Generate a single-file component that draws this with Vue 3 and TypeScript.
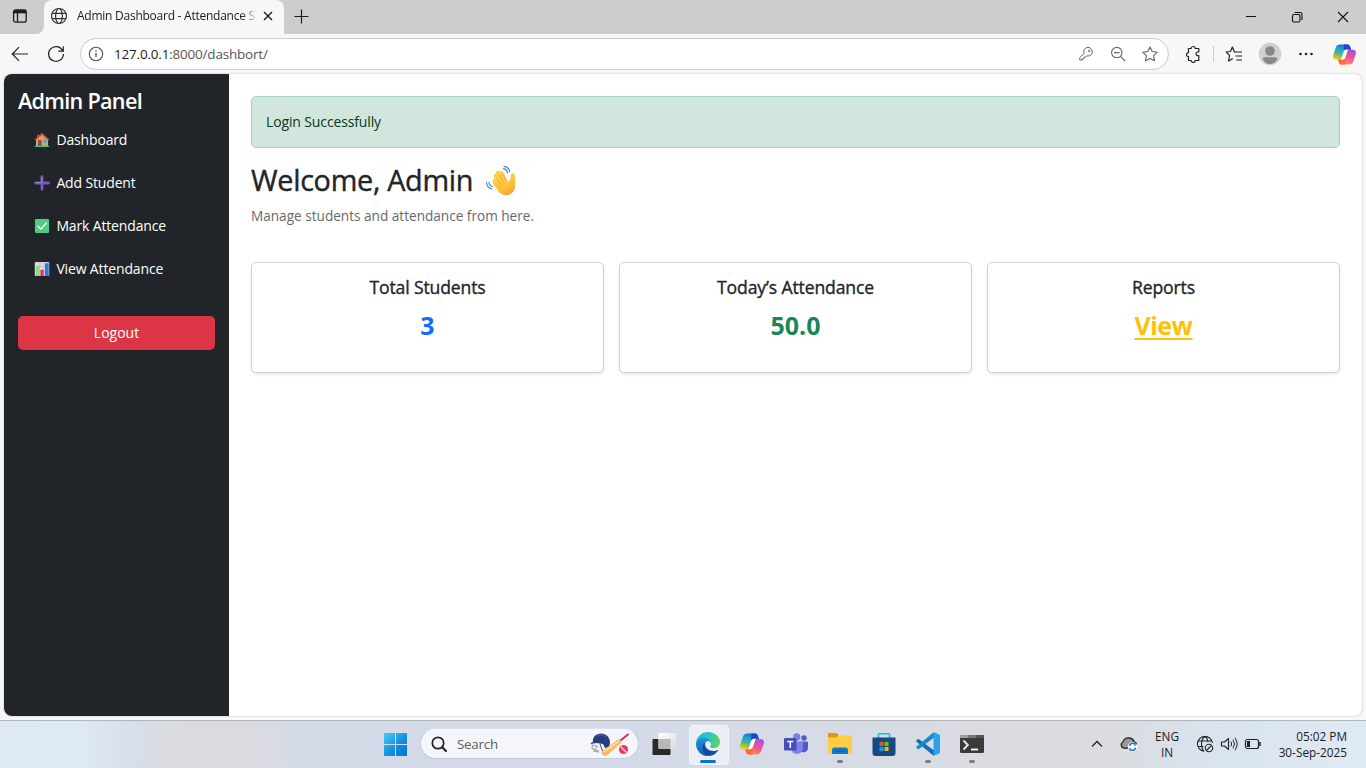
<script setup lang="ts">
interface NavItem {
  icon: 'home' | 'plus' | 'check' | 'chart'
  label: string
}
interface StatCard {
  title: string
  value: string
  tone: string
}

const navItems: NavItem[] = [
  { icon: 'home', label: 'Dashboard' },
  { icon: 'plus', label: 'Add Student' },
  { icon: 'check', label: 'Mark Attendance' },
  { icon: 'chart', label: 'View Attendance' },
]

const cards: StatCard[] = [
  { title: 'Total Students', value: '3', tone: 'primary' },
  { title: 'Today’s Attendance', value: '50.0', tone: 'success' },
  { title: 'Reports', value: 'View', tone: 'warning' },
]
</script>

<template>
  <div class="screen">
    <svg class="defs" width="0" height="0" aria-hidden="true">
      <defs>
        <linearGradient id="cpA" x1="0.6" y1="0" x2="0.3" y2="1">
          <stop offset="0" stop-color="#1b62d8" />
          <stop offset="0.3" stop-color="#18a0e0" />
          <stop offset="0.6" stop-color="#4cb583" />
          <stop offset="1" stop-color="#f5cb16" />
        </linearGradient>
        <linearGradient id="cpB" x1="0.8" y1="0" x2="0.3" y2="1">
          <stop offset="0" stop-color="#a84fe8" />
          <stop offset="0.5" stop-color="#ee5590" />
          <stop offset="1" stop-color="#fb9556" />
        </linearGradient>
        <symbol id="copilot" viewBox="0 0 24 24">
          <path d="M7.500 1.500H15c1.700 0 2.500 1 3 2.700l.9 2.800h-2.600c-1.700 0-2.700.9-3.200 2.600l-1.700 5.200c-.6 1.700-1.700 2.500-3.500 2.500H3.300C.7 17.300-.4 15.400.2 12.800L2.800 4.900C3.500 2.600 5.100 1.500 7.500 1.500z" fill="url(#cpA)" />
          <path d="M11.500 1.500H15c1.700 0 2.500 1 3 2.700l.9 2.800h-2.600c-1.700 0-2.700.9-3.200 2.600L11.200 8z" fill="#1b48c4" />
          <path d="M16.500 22.500H9c-1.700 0-2.500-1-3-2.700l-.8-2.500h2.700c1.800 0 2.900-.8 3.500-2.500l1.700-5.200c.5-1.700 1.500-2.600 3.200-2.600h4.400c2.600 0 3.700 1.900 3.100 4.500l-2.600 7.600c-.7 2.300-2.300 3.400-4.700 3.400z" fill="url(#cpB)" />
          <path d="M12.500 22.500H9c-1.700 0-2.500-1-3-2.700l-.8-2.500h2.700c1.800 0 2.900-.8 3.500-2.500l1.400 1z" fill="#fa6a40" />
          <path d="M13.900 6.800c-1.500 0-2.400.9-2.900 2.500l-1.900 5.800c-.3 1-.7 1.700-1.300 2.200h2.300c1.500 0 2.400-.9 2.900-2.500l1.900-5.800c.3-1 .7-1.800 1.400-2.200z" fill="#fff" />
        </symbol>
      </defs>
    </svg>

    <header class="tabbar">
      <div class="workspaces">
        <svg width="16" height="16" viewBox="0 0 16 16" fill="none" stroke="#1b1b1b" stroke-width="1.3">
          <rect x="1.600" y="2" width="12.600" height="12.200" rx="2" />
          <path d="M1.600 3.800h12.600" stroke-width="3" />
          <path d="M5.500 5v9" />
        </svg>
      </div>
      <div class="tab">
        <svg width="18" height="18" viewBox="0 0 18 18" fill="none" stroke="#333" stroke-width="1.200">
          <circle cx="9" cy="9" r="7.500" />
          <ellipse cx="9" cy="9" rx="3.400" ry="7.500" />
          <path d="M2.200 6.300h13.600M2.200 11.700h13.600" />
        </svg>
        <span class="tab-title">Admin Dashboard - Attendance S</span>
        <svg class="tab-close" width="10" height="10" viewBox="0 0 10 10" stroke="#1b1b1b" stroke-width="1.400">
          <path d="M1 1l8 8M9 1L1 9" />
        </svg>
      </div>
      <svg class="new-tab" width="16" height="16" viewBox="0 0 16 16" stroke="#1b1b1b" stroke-width="1.200">
        <path d="M8.500 1.500v14M1.500 8.500h14" />
      </svg>
      <div class="window-buttons">
        <svg width="46" height="34" viewBox="0 0 46 34" fill="none" stroke="#111"><path d="M18 16.500h10" /></svg>
        <svg width="46" height="34" viewBox="0 0 46 34" fill="none" stroke="#111" stroke-width="1.100">
          <rect x="18.500" y="14.500" width="7.500" height="7.500" rx="1.500" />
          <path d="M20.500 12.500h5.500q2 0 2 2v5.500" />
        </svg>
        <svg width="46" height="34" viewBox="0 0 46 34" fill="none" stroke="#111" stroke-width="1.100"><path d="M18 12l10 10M28 12L18 22" /></svg>
      </div>
    </header>

    <div class="toolbar">
      <div class="tool">
        <svg width="18" height="18" viewBox="0 0 18 18" fill="none" stroke="#222" stroke-width="1.200"><path d="M17 9H1.500M8 2.200L1.300 9 8 15.800" /></svg>
      </div>
      <div class="tool">
        <svg width="18" height="18" viewBox="0 0 18 18" fill="none" stroke="#222" stroke-width="1.200"><path d="M15.700 5.800A7.400 7.400 0 1 0 16.400 9M16.300 1.300v4.900h-5" /></svg>
      </div>
      <div class="address">
        <svg width="16" height="16" viewBox="0 0 16 16" fill="none" stroke="#555" stroke-width="1.100">
          <circle cx="8" cy="8" r="6.700" /><path d="M8 7v4.200M8 4.300v1.400" stroke-width="1.300" />
        </svg>
        <span class="url">127.0.0.1<i>:8000/dashbort/</i></span>
        <div class="address-icons">
          <svg width="16" height="16" viewBox="0 0 16 16" fill="none" stroke="#666" stroke-width="1">
            <path d="M6.100 7.500A4.300 4.300 0 1 1 9 9.900L7.600 11H6v1.700H4.400V14H1.800v-2.500z" stroke-linejoin="round" />
            <circle cx="11.200" cy="4.900" r=".8" />
          </svg>
          <svg width="16" height="16" viewBox="0 0 16 16" fill="none" stroke="#666" stroke-width="1.100">
            <circle cx="6.800" cy="6.600" r="5.200" /><path d="M4 6.600h5.600M10.600 10.400L15 15" />
          </svg>
          <svg width="16" height="16" viewBox="0 0 16 16" fill="none" stroke="#666" stroke-width="1.100" stroke-linejoin="round">
            <path d="M8 .9l2.200 4.600 5.100.7-3.700 3.500.9 5.100L8 12.400l-4.500 2.400.9-5.100L.7 6.200l5.100-.7z" />
          </svg>
        </div>
      </div>
      <div class="tool tool-ext">
        <svg width="18" height="18" viewBox="0 0 18 18" fill="none" stroke="#222" stroke-width="1.200" stroke-linejoin="round">
          <path d="M4.500 3.500h2.700a2 2 0 0 1 4 0h3.600V7h-1a1.700 1.700 0 0 0 0 3.600h1v4.900h-3.600a2 2 0 0 1-4 0H4.500v-3.800a2 2 0 0 1 0-4z" />
        </svg>
      </div>
      <span class="divider"></span>
      <div class="tool tool-fav">
        <svg width="18" height="18" viewBox="0 0 18 18" fill="none" stroke="#222" stroke-width="1.200" stroke-linejoin="round">
          <path d="M12 7H9.400L7.400 2 5.400 6.500 1.200 7l3.300 3.400L3.600 16l4.200-2.500M9.500 7H17M10.500 11H17M11.200 15H17" />
        </svg>
      </div>
      <div class="tool">
        <svg width="24" height="24" viewBox="0 0 24 24">
          <circle cx="12" cy="12" r="11.200" fill="#d2d0ce" /><circle cx="12" cy="9" r="4.800" fill="#8a8886" />
          <path d="M4.800 17.200q0-2 2-2h10.400q2 0 2 2Q17 22 12 22t-7.200-4.800z" fill="#8a8886" />
        </svg>
      </div>
      <div class="tool">
        <svg width="16" height="4" viewBox="0 0 16 4" fill="#222"><circle cx="2.500" cy="2" r="1.300" /><circle cx="8" cy="2" r="1.300" /><circle cx="13.500" cy="2" r="1.300" /></svg>
      </div>
      <div class="tool tool-copilot"><svg width="23" height="23"><use href="#copilot" /></svg></div>
    </div>

    <div class="viewport">
      <aside class="sidebar">
        <h4>Admin Panel</h4>
        <nav>
          <a v-for="item in navItems" :key="item.label">
            <svg v-if="item.icon === 'home'" width="16" height="16" viewBox="0 0 16 16">
              <path d="M3 2.500h2v4H3z" fill="#9d4c3b" /><path d="M2 7l6-5 6 5v7.500H2z" fill="#d9a06c" />
              <path d="M8 .8l7.300 6.800-1 .9L8 3 1.700 8.500l-1-.9z" fill="#dd4b36" />
              <path d="M4 8h3.600v6H4z" fill="#8b4f43" /><path d="M9.500 7.500h3v3.200h-3z" fill="#35a8ec" />
              <path d="M.8 13.700h14.400v1.200H.8z" fill="#35c878" />
            </svg>
            <svg v-else-if="item.icon === 'plus'" width="16" height="16" viewBox="0 0 16 16">
              <path d="M8 1.700v12.600M1.500 8h13" stroke="#7957bd" stroke-width="2.800" stroke-linecap="round" />
              <path d="M7.400 2v5.500H2" stroke="#9a84d4" fill="none" stroke-width="1" />
            </svg>
            <svg v-else-if="item.icon === 'check'" width="16" height="16" viewBox="0 0 16 16">
              <rect x=".9" y=".9" width="14.200" height="14.200" rx="1.300" fill="#4bcd83" />
              <path d="M4 8.300l2.800 2.800L12.400 5" fill="none" stroke="#fff" stroke-width="1.400" stroke-linecap="round" />
            </svg>
            <svg v-else width="16" height="16" viewBox="0 0 16 16">
              <rect x=".8" y="1" width="14.400" height="14" rx="1" fill="#ddd5e3" />
              <path d="M1 5.500h14M1 10h14M5.700 1v14M10.500 1v14" stroke="#c4bacb" stroke-width=".5" />
              <path d="M2 5h3.500v10H2z" fill="#8bdc72" /><path d="M6.500 8.800h3.200V15H6.500z" fill="#e42e70" /><path d="M11 2.300h3.700V15H11z" fill="#2c80d4" />
            </svg>
            <span>{{ item.label }}</span>
          </a>
        </nav>
        <button type="button" class="logout">Logout</button>
      </aside>

      <main class="content">
        <div class="alert"><span>Login Successfully</span></div>
        <h2>
          <span>Welcome, Admin</span>
          <svg width="32" height="32" viewBox="0 0 32 32" fill="none">
            <defs><linearGradient id="hand" x1=".3" y1=".1" x2=".8" y2="1"><stop offset="0" stop-color="#ffd04a" /><stop offset=".6" stop-color="#ffc138" /><stop offset="1" stop-color="#f59a33" /></linearGradient></defs>
            <path d="M10.400 17.200l-.8-1.400M12 14l-1.400-3.200M15 11.800l-2-4M18.500 11.500l-2-3.500" stroke="#ffcd45" stroke-width="4" stroke-linecap="round" />
            <path d="M9 14.500L18 8.500 23.500 17l1.700-2.500.6-4.600c.3-2.300 3.700-2 4 .4.500 3.500.8 7.500.3 11.200-.7 5.500-4.300 8.500-9.300 8.500-3.800 0-6-1.800-8.200-4.600L8.200 19q-1.500-2.500.8-4.500z" fill="url(#hand)" />
            <path d="M12 13.800l3.600 5M14.600 11l4.200 6M17.700 9.800l3.600 5.400" stroke="#f2a02d" stroke-width=".8" stroke-linecap="round" />
            <path d="M18.500 3.600c2.200.3 3.600 1.800 4 4.200M19 1.300c3.200.4 5.200 2.500 5.600 5.500M4 17.300c.2 2.200 1.500 3.800 3.700 4.500M1.500 17.500c.3 3.200 2.200 5.500 5 6.400" stroke="#3f8ccb" stroke-width="1.200" stroke-linecap="round" />
          </svg>
        </h2>
        <p class="muted"><span>Manage students and attendance from here.</span></p>
        <section class="cards">
          <article v-for="card in cards" :key="card.title" class="card">
            <h5>{{ card.title }}</h5>
            <p :class="['value', card.tone]">{{ card.value }}</p>
          </article>
        </section>
      </main>
    </div>

    <footer class="taskbar">
      <div class="apps">
        <div class="app">
          <svg width="24" height="24" viewBox="0 0 24 24">
            <defs><linearGradient id="win" x1="0" y1="0" x2="24" y2="24" gradientUnits="userSpaceOnUse"><stop offset="0" stop-color="#4ecbf7" /><stop offset=".55" stop-color="#1191e0" /><stop offset="1" stop-color="#0473ce" /></linearGradient></defs>
            <path d="M0 1.500Q0 1 .5 1H11v11H0zM12 1h10.500q.5 0 .5.500V12H12zM0 13h11v11H.5q-.5 0-.5-.5zM12 13h11v10.500q0 .5-.5.500H12z" fill="url(#win)" />
          </svg>
        </div>
        <div class="search">
          <svg width="16" height="16" viewBox="0 0 16 16" fill="none" stroke="#222" stroke-width="1.700"><circle cx="7" cy="7" r="5.700" /><path d="M11.200 11.200L15 15" stroke-width="2" stroke-linecap="round" /></svg>
          <span>Search</span>
          <svg class="cricket" width="42" height="26" viewBox="0 0 42 26">
            <path d="M3 14l7 2M2 17l8 3M4 20l6 1M3 13q0 8 7 8M7 14v7" stroke="#aaa" fill="none" />
            <path d="M4 12C3 6 7 2.500 12 2.500S21 6 21 12l-1 4-4 1-2-4-7-1-5 1q-1-1 2-2z" fill="#273b7d" />
            <path d="M8 5q4-3 9 1" stroke="#5268ae" fill="none" /><path d="M11 13l3 8 4-4" stroke="#444" fill="none" />
            <path d="M12.500 20.500L29 8.500q2-1 4 2.500L18 24.500q-2 1-4-.5t-1.500-3.500z" fill="#f8b667" /><path d="M14.500 21L31 9.500" stroke="#ffdb9d" stroke-width="1.700" />
            <path d="M32 9l7-5.500" stroke="#d52d46" stroke-width="1.900" stroke-linecap="round" />
            <circle cx="34.500" cy="18.500" r="4.600" fill="#ee3a60" /><path d="M31.500 15.500l6 6" stroke="#ffc6d0" stroke-width="1.500" />
          </svg>
        </div>
        <div class="app">
          <svg width="24" height="24" viewBox="0 0 24 24">
            <defs><linearGradient id="tv" x1="0" y1="0" x2="1" y2="1"><stop offset="0" stop-color="#fff" /><stop offset="1" stop-color="#dcdcdc" /></linearGradient></defs>
            <rect y="7" x=".5" width="18" height="16" rx="1" fill="#292929" /><rect x="6.500" y="1" width="17.500" height="16" rx="1" fill="url(#tv)" /><path d="M6.500 7h12v10h-11q-1 0-1-1z" fill="#b8b8b8" />
          </svg>
        </div>
        <div class="app active">
          <svg width="24" height="24" viewBox="4.500 3.800 256 256">
            <defs>
              <linearGradient id="eg" x1="0" y1=".3" x2="1" y2=".4"><stop offset="0" stop-color="#2aaee4" /><stop offset=".5" stop-color="#2fc3c5" /><stop offset="1" stop-color="#5fd658" /></linearGradient>
              <linearGradient id="eb" x1="0" y1="0" x2="0" y2="1"><stop offset="0" stop-color="#1b9de2" /><stop offset="1" stop-color="#0b5db5" /></linearGradient>
            </defs>
            <path d="M235.680 195.460a93.730 93.730 0 0 1-10.540 4.710 101.870 101.870 0 0 1-35.900 6.460c-47.320 0-88.540-32.550-88.540-74.320A31.480 31.480 0 0 1 117.130 105c-42.800 1.800-53.800 46.400-53.800 72.530 0 73.880 68.090 81.370 82.760 81.370 7.910 0 19.840-2.300 27-4.560l1.310-.44a128.340 128.340 0 0 0 66.600-52.800 4 4 0 0 0-5.320-5.640z" fill="#0e4f98" />
            <path d="M110.340 246.340A79.200 79.200 0 0 1 87.600 225a80.720 80.720 0 0 1 29.530-120c3.120-1.470 8.450-4.130 15.540-4a32.350 32.350 0 0 1 25.690 13 31.880 31.880 0 0 1 6.360 18.660c0-.21 24.460-79.600-80-79.600-43.900 0-80 41.660-80 78.210a130.150 130.150 0 0 0 12.110 56 128 128 0 0 0 156.380 67.110 75.550 75.550 0 0 1-62.780-8z" fill="url(#eb)" />
            <path d="M156.940 153.780c-.81 1.050-3.300 2.500-3.300 5.660 0 2.610 1.700 5.120 4.720 7.230 14.380 10 41.490 8.680 41.560 8.680a59.560 59.560 0 0 0 30.270-8.350 61.380 61.380 0 0 0 30.430-52.880c.26-22.410-8-37.310-11.340-43.910C228.090 28.760 182.350 3.810 132.610 3.810a128 128 0 0 0-128 126.200c.48-36.540 36.800-66.050 80-66.050 3.500 0 23.460.34 42 10.070 16.340 8.580 24.900 18.940 30.850 29.210 6.180 10.670 7.280 24.150 7.280 29.520s-2.740 13.330-7.800 20.020z" fill="url(#eg)" />
          </svg>
        </div>
        <div class="app"><svg width="24" height="24"><use href="#copilot" /></svg></div>
        <div class="app">
          <svg width="24" height="24" viewBox="0 0 24 24">
            <circle cx="20" cy="6" r="2.700" fill="#5059c9" /><path d="M16 9.500h7q1 0 1 1V16a4.500 4.500 0 0 1-8 2.500z" fill="#5059c9" />
            <circle cx="12.800" cy="5" r="3.700" fill="#7b83eb" /><path d="M8 9.500h10q1 0 1 1V16a6 6 0 0 1-12 0z" fill="#7b83eb" />
            <rect y="6" width="12.500" height="12.500" rx="1.200" fill="#464eb8" /><path d="M3.300 9.500h6M6.300 9.500v6.500" stroke="#fff" stroke-width="1.500" />
          </svg>
        </div>
        <div class="app running">
          <svg width="24" height="24" viewBox="0 0 24 24">
            <path d="M0 2q0-1 1-1h7.500L10.500 3v3H0z" fill="#dc9a0b" /><path d="M0 5.500h8l2.500-2H23q1 0 1 1V21q0 1-1 1H1q-1 0-1-1z" fill="#ffcd41" />
            <path d="M4 22v-4q0-2.500 2.500-2.500h11Q20 15.500 20 18v4z" fill="#1578c8" /><path d="M7 19h10" stroke="#0b579d" stroke-width="1" />
          </svg>
        </div>
        <div class="app">
          <svg width="24" height="24" viewBox="0 0 24 24">
            <path d="M6.500 6V2.500q0-.8.800-.8h9.400q.8 0 .8.800V6" fill="none" stroke="#22b5ec" stroke-width="1.600" />
            <path d="M.5 5.500h23V21q0 3-3 3h-17q-3 0-3-3z" fill="#164a81" />
            <path d="M7.500 10h4v4h-4z" fill="#f25022" /><path d="M12.500 10h4v4h-4z" fill="#7fba00" /><path d="M7.500 15h4v4h-4z" fill="#00a4ef" /><path d="M12.500 15h4v4h-4z" fill="#ffb900" />
          </svg>
        </div>
        <div class="app running">
          <svg width="24" height="24" viewBox="0 0 24 24">
            <path d="M.4 8.500l1.300-1.300q.6-.5 1.300 0L18 18.500V24L.5 9.700q-.6-.6-.1-1.200z" fill="#0f6fb5" /><path d="M.4 15.700l1.300 1.300q.6.500 1.300 0L18 5.500V0L.5 14.500q-.6.600-.1 1.200z" fill="#1789cf" />
            <path d="M17.500 0L23 2.500q1 .5 1 1.500v16q0 1-1 1.500L17.500 24z" fill="#29a3ee" />
          </svg>
        </div>
        <div class="app running">
          <svg width="24" height="24" viewBox="0 0 24 24">
            <rect y="3" width="24" height="18" rx="1.300" fill="#3a3a3a" /><path d="M0 6V4.300Q0 3 1.300 3H8v3z" fill="#a0a0a0" /><path d="M8 3h8v3H8z" fill="#777" /><path d="M16 3h6.700Q24 3 24 4.300V6h-8z" fill="#555" />
            <path d="M3.500 8.500l4.300 4.500-4.300 4.500" fill="none" stroke="#e3e3e3" stroke-width="2" /><path d="M11 17.500h7" stroke="#fff" stroke-width="1.800" />
          </svg>
        </div>
      </div>

      <div class="tray">
        <svg class="chevron" width="12" height="8" viewBox="0 0 12 8" fill="none" stroke="#222" stroke-width="1.300"><path d="M1 6.500l5-5 5 5" /></svg>
        <svg class="cloud" width="18" height="16" viewBox="0 0 18 16">
          <path d="M4 12.200A3.500 3.500 0 0 1 3 5.700Q5 1.500 9.300 2q4 .4 4.800 4 2.500.5 2.300 3.300-.3 2.900-3 2.900z" fill="#999" stroke="#222" stroke-width="1.300" />
          <circle cx="12.500" cy="10.800" r="4.700" fill="#fff" /><path d="M9.500 10a3 3 0 0 1 5.300-1.500V7M15.500 11.600a3 3 0 0 1-5.300 1.600v1.500" fill="none" stroke="#1574cf" stroke-width="1.500" />
        </svg>
        <div class="lang"><span>ENG</span><span>IN</span></div>
        <svg class="globe" width="18" height="18" viewBox="0 0 18 18" fill="none" stroke="#222" stroke-width="1.100">
          <path d="M8 16.300A7.500 7.500 0 1 1 16.400 8M8 16.300Q5.500 14 5.500 9T9 1.300q2.300 1.500 3 5.700M2 6h14M2 11.500h5.500" />
          <circle cx="13" cy="13" r="3.700" /><path d="M10.500 15.500l5-5" />
        </svg>
        <svg class="speaker" width="18" height="16" viewBox="0 0 18 16" fill="none" stroke="#222" stroke-width="1.100" stroke-linejoin="round">
          <path d="M1.500 6h3l4-3.500v11l-4-3.500h-3z" /><path d="M10.800 5.500q1.700 2.500 0 5M13 3.700q3 4.300 0 8.600M15 1.800q4.300 6.200 0 12.400" stroke-width="1" />
        </svg>
        <svg class="battery" width="18" height="12" viewBox="0 0 18 12"><rect x="1.500" y="1.500" width="13" height="9" rx="2" fill="none" stroke="#222" stroke-width="1.200" /><rect x="3" y="3" width="3" height="6" fill="#222" /><path d="M16 4v4" stroke="#222" stroke-width="1.500" /></svg>
        <div class="clock"><span>05:02 PM</span><span>30-Sep-2025</span></div>
      </div>
    </footer>
  </div>
</template>

<style>
body { margin: 0; overflow: hidden; }
</style>

<style scoped>
* { box-sizing: border-box; }
.screen {
  width: 1366px; height: 768px; display: flex; flex-direction: column; overflow: hidden;
  background: #f7f7f7; color: #212529; font-family: "Open Sans", "Noto Sans", sans-serif;
}
svg { display: block; flex: none; }
.defs { position: absolute; }

.tabbar { height: 34px; flex: none; display: flex; align-items: center; background: #cdcdcd; }
.workspaces { width: 44px; height: 34px; flex: none; background: #f7f7f7; }
.workspaces svg { box-sizing: content-box; width: 16px; padding: 8px 16px 10px 12px; background: #cdcdcd; border-bottom-right-radius: 8px; }
.tab { width: 240px; height: 34px; flex: none; display: flex; align-items: center; padding: 0 11px 2px 6px; background: #f7f7f7; border-radius: 8px 8px 0 0; }
.tab-title {
  width: 181px; flex: none; margin-left: 9px; white-space: nowrap; font-size: 12px; line-height: 18px; letter-spacing: -0.25px; color: #1b1b1b;
  mask-image: linear-gradient(90deg, #000 164px, transparent 181px);
}
.tab-close { margin-left: auto; }
.new-tab { margin: -3px 0 0 9px; }
.window-buttons { margin-left: auto; display: flex; }

.toolbar { height: 40px; flex: none; display: flex; align-items: center; padding: 0 4px 0 2px; }
.tool { width: 36px; display: flex; justify-content: center; }
.address { width: 1089px; height: 32px; display: flex; align-items: center; margin-left: 6px; padding: 0 10px 0 7px; border: 1px solid #ccc; border-radius: 16px; background: #fff; }
.url { margin-left: 10px; font-size: 13.500px; letter-spacing: -0.2px; color: #1b1b1b; }
.url i { font-style: normal; color: #555; }
.address-icons { margin-left: auto; display: flex; gap: 16px; }
.tool-ext { margin-left: 6px; }
.divider { width: 1px; height: 16px; margin-left: 2px; background: #ccc; }
.tool-fav { margin-left: 2px; }
.tool-copilot { margin-left: 2px; }

.viewport { height: 642px; flex: none; display: flex; margin: 0 4px; overflow: hidden; border-radius: 8px; background: #fff; box-shadow: 0 0 2px rgba(0, 0, 0, 0.28); }
.sidebar { width: 225px; flex: none; padding: 14px; background: #212529; color: #fff; }
.sidebar h4 { margin: 0 0 8px; font-size: 21.600px; line-height: 26px; font-weight: 600; letter-spacing: -0.7px; }
.sidebar nav { display: flex; flex-direction: column; gap: 7px; }
.sidebar a { display: flex; align-items: center; gap: 6px; height: 36px; padding-left: 16.400px; font-size: 14px; letter-spacing: -0.15px; }
.sidebar a span { margin-top: -1px; }
.logout { display: block; width: 197px; height: 34px; margin-top: 29px; padding: 0 0 2px; border: 0; border-radius: 5px; background: #dc3545; color: #fff; font: 14px "Open Sans", sans-serif; }

.content { flex: 1; padding: 22px; }
.alert { height: 52px; display: flex; align-items: center; padding: 0 14px 2px; border: 1px solid #a3cfbb; border-radius: 5px; background: #d1e7dd; color: #0a3622; font-size: 14px; letter-spacing: -0.13px; }
.content h2 { display: flex; align-items: center; gap: 12px; height: 36px; margin: 13px 0 8px; font-size: 28.800px; font-weight: 500; letter-spacing: -0.3px; -webkit-text-stroke: 0.4px #212529; }
.content h2 svg { margin-top: 4px; }
.muted { margin: 0; font-size: 13.600px; line-height: 22px; color: #65696d; }
.cards { display: grid; grid-template-columns: repeat(3, 1fr); gap: 15px; margin-top: 35px; }
.card { height: 111px; padding: 13px; border: 1px solid #d0d1d2; border-radius: 5px; background: #fff; text-align: center; box-shadow: 0 2px 3px rgba(0, 0, 0, 0.075); }
.card h5 { margin: 0 0 7px; font-size: 17.600px; line-height: 22px; font-weight: 500; letter-spacing: -0.15px; -webkit-text-stroke: 0.35px #212529; }
.value { margin: 0; font-size: 25px; line-height: 40px; font-weight: 700; }
.primary { color: #0d6efd; }
.success { color: #198754; }
.warning { color: #ffc107; letter-spacing: -0.5px; text-decoration: underline; text-decoration-thickness: 2px; text-underline-offset: 3px; }

.taskbar {
  height: 48px; flex: none; display: flex; justify-content: space-between; margin-top: 4px; padding-bottom: 2px; border-top: 1px solid #b0b5ba; color: #1b1b1b;
  background: linear-gradient(90deg, #dfeaf4 0, #dfe9f4 80px, #d8e0ec 125px, #d9dce0 160px, #d9dbde 250px, #d4dae7 300px, #d4dae8 620px, #d7dbe5 850px, #dadce0 1010px, #dadcdf 1110px, #d9e3ef 1210px, #dfeaf4 1366px);
}
.apps { display: flex; align-items: center; padding-left: 374px; }
.app { position: relative; width: 44px; height: 47px; display: flex; align-items: center; justify-content: center; }
.app svg { position: relative; }
.active::before { content: ""; position: absolute; left: 3px; top: 5px; width: 38px; height: 38px; border-radius: 4px; background: #ebeef4; border: 1px solid #f1f3f7; }
.active::after { content: ""; position: absolute; left: 14px; bottom: 4px; width: 16px; height: 3px; border-radius: 2px; background: #0078d4; }
.running::after { content: ""; position: absolute; left: 19px; bottom: 4px; width: 6px; height: 3px; border-radius: 2px; background: #7c7e84; }
.search { width: 219px; height: 31px; display: flex; align-items: center; margin: 0 3px 0 2px; padding: 0 7px 0 10px; border-radius: 16px; background: #f4f6fb; border: 1px solid #c4cad8; border-top-color: #dde1eb; }
.search span { margin-left: 10px; font-size: 13.300px; letter-spacing: -0.2px; color: #5b5d61; }
.cricket { margin-left: auto; }
.tray { display: flex; align-items: center; padding-right: 19px; font-size: 11.800px; line-height: 16px; }
.cloud { margin-left: 17px; }
.lang { display: flex; flex-direction: column; width: 30px; margin-left: 14px; text-align: center; }
.globe { margin-left: 14px; }
.speaker { margin-left: 6px; }
.battery { margin-left: 6px; }
.clock { display: flex; flex-direction: column; width: 76px; margin-left: 9px; text-align: right; white-space: nowrap; align-items: flex-end; }
</style>
